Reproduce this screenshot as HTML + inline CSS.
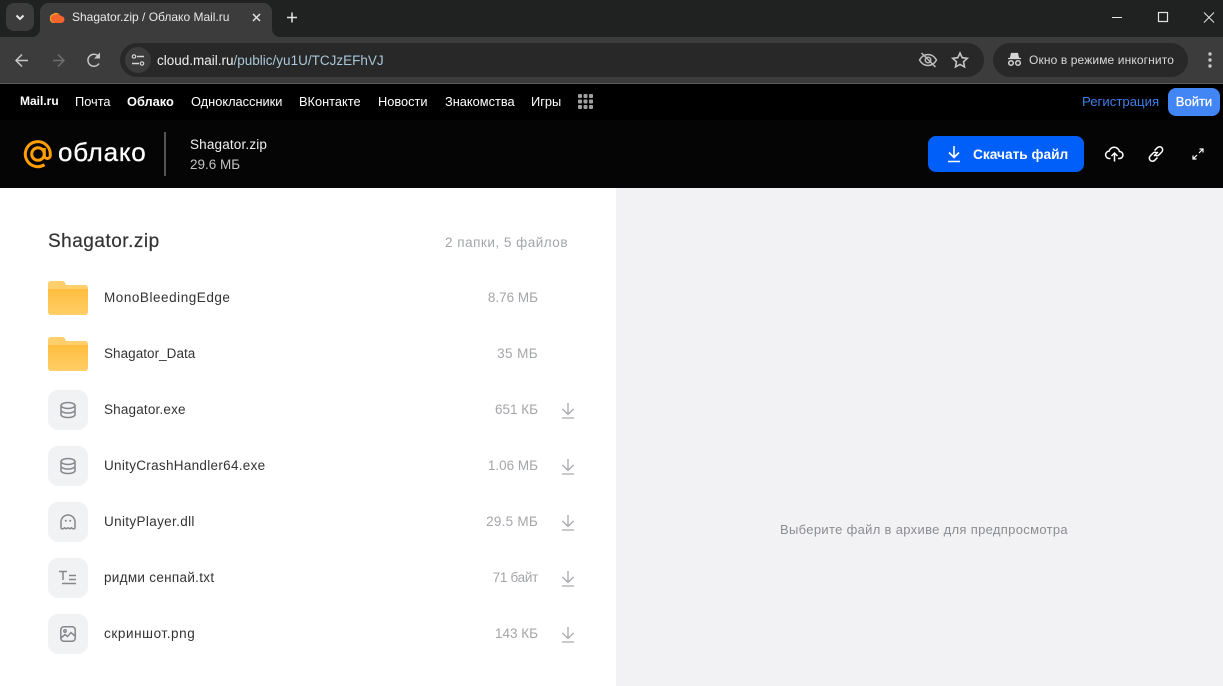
<!DOCTYPE html>
<html lang="ru"><head><meta charset="utf-8"><title>Shagator.zip / Облако Mail.ru</title>
<style>
html,body{margin:0;padding:0;width:1223px;height:686px;overflow:hidden;background:#fff;font-family:"Liberation Sans","DejaVu Sans",sans-serif}
.a{position:absolute;white-space:nowrap}
svg{position:absolute;overflow:visible}
.nav{top:94px;font-size:12.8px;line-height:15px;color:#fff}
.name{left:104px;font-size:13.5px;line-height:16px;color:#333;letter-spacing:.35px}
.size{right:685px;font-size:13.5px;line-height:16px;color:#a3a5a9}
.ic{left:48px;width:40px;height:40px;border-radius:10px;background:#f1f2f4}
</style></head><body>
<div class="a" style="left:0;top:0;width:1223px;height:37px;background:#202222"></div>
<div class="a" style="left:0;top:37px;width:1223px;height:46px;background:#3c3c3c"></div>
<div class="a" style="left:0;top:83px;width:1223px;height:1px;background:#5a5a5a"></div>
<div class="a" style="left:6px;top:3px;width:28px;height:28px;border-radius:8px;background:#3c3c3c"></div>
<svg style="left:0;top:0" width="40" height="37"><path d="M16.5 15.5l3.500 3.500 3.500-3.500" fill="none" stroke="#e8e8e8" stroke-width="2"/></svg>
<div class="a" style="left:40px;top:3px;width:232px;height:34px;border-radius:9px 9px 0 0;background:#3c3c3c"></div>
<svg style="left:0;top:0" width="300" height="40"><path d="M32 37a8 8 0 0 0 8-8v8zM272 29a8 8 0 0 0 8 8h-8z" fill="#3c3c3c"/><path d="M50 18a4 4 0 0 1 3-4a4.500 4.500 0 0 1 6 0l-2 9h-4a4 4 0 0 1-3-5z" fill="#ffa92b"/><path d="M55 14.500a4.500 4.500 0 0 1 6 1.500a3.500 3.500 0 0 1 0 7h-6a4 4 0 0 1 0-8.500z" fill="#f4642c"/><path d="M253 14l7 7m0-7l-7 7" stroke="#e3e3e3" stroke-width="1.500"/><path d="M292 12.500v10M287 17.500h10" stroke="#e3e3e3" stroke-width="1.500"/></svg>
<div class="a" style="left:72px;top:10px;font-size:12px;line-height:15px;color:#e8e8e8">Shagator.zip / Облако Mail.ru</div>
<svg style="left:1110px;top:0" width="113" height="37"><path d="M2 17.500h10" stroke="#e5e5e5" stroke-width="1"/><rect x="48.500" y="12.500" width="9" height="9" fill="none" stroke="#e5e5e5" stroke-width="1.200"/><path d="M94 12.500l10 10m0-10l-10 10" stroke="#e5e5e5" stroke-width="1"/></svg>
<svg style="left:0;top:37px" width="120" height="46"><path d="M28 23.500H17M22 17.500l-6 6 6 6" fill="none" stroke="#c7c7c7" stroke-width="1.500"/><path d="M53 23.500h10M58 17.500l6 6-6 6" fill="none" stroke="#6e6e6e" stroke-width="1.500"/><path d="M99 20a6 6 0 1 0 0 6.500" fill="none" stroke="#c7c7c7" stroke-width="1.500"/><path d="M100 15.500v6h-6z" fill="#c7c7c7"/></svg>
<div class="a" style="left:120px;top:43px;width:864px;height:34px;border-radius:17px;background:#282828"></div>
<div class="a" style="left:125px;top:47px;width:26px;height:26px;border-radius:13px;background:#3c3c3c"></div>
<svg style="left:125px;top:47px" width="26" height="26"><circle cx="9" cy="9.500" r="1.700" fill="none" stroke="#d5d5d5" stroke-width="1.200"/><path d="M12 9.500h7M7 16.500h7" stroke="#d5d5d5" stroke-width="1.400"/><circle cx="17" cy="16.500" r="1.700" fill="none" stroke="#d5d5d5" stroke-width="1.200"/></svg>
<div class="a" style="left:157px;top:52px;font-size:13.5px;line-height:17px;color:#a8c7d8"><span style="color:#eee">cloud.mail.ru</span>/public/yu1U/TCJzEFhVJ</div>
<svg style="left:918px;top:50px" width="54" height="20"><path d="M1.500 10c2-3.500 5-5.500 8.500-5.500S16.500 6.500 18.500 10c-2 3.500-5 5.500-8.500 5.500S3.500 13.500 1.500 10z" fill="none" stroke="#bdbdbd" stroke-width="1.500"/><circle cx="10" cy="10" r="2.800" fill="none" stroke="#bdbdbd" stroke-width="1.400"/><path d="M3.500 3l14 14" stroke="#bdbdbd" stroke-width="1.500"/><path d="M42 3l2.200 4.700 5.100.6-3.800 3.500 1 5.100-4.500-2.500-4.500 2.500 1-5.100-3.800-3.500 5.100-.6z" fill="none" stroke="#c4c4c4" stroke-width="1.600"/></svg>
<div class="a" style="left:993px;top:43px;width:195px;height:34px;border-radius:17px;background:#282828"></div>
<svg style="left:1005px;top:50px" width="20" height="20"><path d="M3 8.500h13M5.500 8l1-4.500h6l1 4.500" fill="#d5d5d5" stroke="#d5d5d5" stroke-width="1.300"/><circle cx="6" cy="13" r="2.300" fill="none" stroke="#d5d5d5" stroke-width="1.500"/><circle cx="13" cy="13" r="2.300" fill="none" stroke="#d5d5d5" stroke-width="1.500"/></svg>
<div class="a" style="left:1029px;top:53px;font-size:12px;line-height:15px;color:#d9d9d9;letter-spacing:.12px">Окно в режиме инкогнито</div>
<svg style="left:1205px;top:50px" width="10" height="20"><circle cx="5" cy="4" r="1.700" fill="#c7c7c7"/><circle cx="5" cy="10" r="1.700" fill="#c7c7c7"/><circle cx="5" cy="16" r="1.700" fill="#c7c7c7"/></svg>

<div class="a" style="left:0;top:84px;width:1223px;height:36px;background:#000"></div>
<div class="a nav" style="left:20px;font-weight:bold;font-size:12px">Mail.ru</div>
<div class="a nav" style="left:75px">Почта</div>
<div class="a nav" style="left:127px;font-weight:bold">Облако</div>
<div class="a nav" style="left:191px">Одноклассники</div>
<div class="a nav" style="left:299px">ВКонтакте</div>
<div class="a nav" style="left:378px">Новости</div>
<div class="a nav" style="left:445px">Знакомства</div>
<div class="a nav" style="left:531px">Игры</div>
<svg style="left:578px;top:94px" width="16" height="16" fill="#a0a0a0"><rect y="0" width="4" height="4" rx="1"/><rect x="5.500" width="4" height="4" rx="1"/><rect x="11" width="4" height="4" rx="1"/><rect y="5.500" width="4" height="4" rx="1"/><rect x="5.500" y="5.500" width="4" height="4" rx="1"/><rect x="11" y="5.500" width="4" height="4" rx="1"/><rect y="11" width="4" height="4" rx="1"/><rect x="5.500" y="11" width="4" height="4" rx="1"/><rect x="11" y="11" width="4" height="4" rx="1"/></svg>
<div class="a nav" style="left:1082px;color:#3f7ee8;font-size:13.2px">Регистрация</div>
<div class="a" style="left:1168px;top:88px;width:52px;height:28px;border-radius:8px;background:#4285f4;color:#fff;font-size:13px;line-height:27px;text-align:center;-webkit-text-stroke:.25px #fff">Войти</div>

<div class="a" style="left:0;top:120px;width:1223px;height:68px;background:#050505"></div>
<svg style="left:24px;top:140px" width="28" height="28"><circle cx="14" cy="14" r="6.300" fill="none" stroke="#ff9e00" stroke-width="3"/><path d="M20.300 8v7.500a3 3 0 0 0 6 0V14A12.500 12.500 0 1 0 20.500 24.700" fill="none" stroke="#ff9e00" stroke-width="3"/></svg>
<div class="a" style="left:58px;top:136px;font-size:26px;line-height:32px;color:#fff;letter-spacing:.75px;-webkit-text-stroke:.3px #fff">облако</div>
<div class="a" style="left:164px;top:132px;width:2px;height:44px;background:#555"></div>
<div class="a" style="left:190px;top:136px;font-size:13.5px;line-height:17px;color:#f0f0f0;letter-spacing:.17px">Shagator.zip</div>
<div class="a" style="left:190px;top:156px;font-size:13.5px;line-height:17px;color:#c2c2c2">29.6 МБ</div>
<div class="a" style="left:928px;top:136px;width:156px;height:36px;border-radius:8px;background:#005ff9"></div>
<svg style="left:946px;top:145px" width="16" height="18"><path d="M8 1v11M3 7.500l5 5 5-5M2 16.500h12" fill="none" stroke="#fff" stroke-width="1.600"/></svg>
<div class="a" style="left:973px;top:146px;font-size:13.7px;line-height:17px;font-weight:bold;color:#fff">Скачать файл</div>
<svg style="left:1105px;top:145px" width="19" height="18"><path d="M5.500 13.500h-1a3.700 3.700 0 0 1-.4-7.400 5.300 5.300 0 0 1 10.300.4 3.500 3.500 0 0 1 .1 7h-1.500" fill="none" stroke="#fff" stroke-width="1.500"/><path d="M9.500 16.500V8.500M6.500 11l3-3 3 3" fill="none" stroke="#fff" stroke-width="1.500"/></svg>
<svg style="left:1147px;top:145px" width="18" height="18"><path d="M7.500 5.500l2.800-2.800a3 3 0 0 1 4.500 4.300l-2.800 2.800a3 3 0 0 1-3.500.5M10.500 12.500l-2.800 2.800a3 3 0 0 1-4.500-4.300l2.800-2.800a3 3 0 0 1 3.500-.5M7 11l4-4" fill="none" stroke="#fff" stroke-width="1.500"/></svg>
<svg style="left:1192px;top:148px" width="12" height="12"><path d="M7 5l4-4M7.500 1H11v3.500M5 7l-4 4M1 7.500V11h3.500" fill="none" stroke="#fff" stroke-width="1.200"/></svg>

<div class="a" style="left:616px;top:188px;width:607px;height:498px;background:#f2f2f4"></div>
<div class="a" style="left:48px;top:231px;font-size:19px;line-height:22px;color:#333;letter-spacing:.5px;-webkit-text-stroke:.2px #333">Shagator.zip</div>
<div class="a" style="right:655px;top:235px;font-size:13.5px;line-height:16px;color:#a3a5a9;letter-spacing:.5px">2 папки, 5 файлов</div>
<div class="a" style="left:780px;top:522px;font-size:13px;line-height:16px;color:#8b8d91;letter-spacing:.32px">Выберите файл в архиве для предпросмотра</div>

<svg style="left:48px;top:281px" width="40" height="34"><defs><linearGradient id="f" x1="0" y1="0" x2="0" y2="1"><stop offset="0" stop-color="#ffbd3e"/><stop offset="1" stop-color="#ffce68"/></linearGradient></defs><path d="M0 3a3 3 0 0 1 3-3h11a3 3 0 0 1 3 2l1 2h19a3 3 0 0 1 3 3v4H0z" fill="#ffcf6c"/><path d="M0 8h40v23a3 3 0 0 1-3 3H3a3 3 0 0 1-3-3z" fill="url(#f)"/></svg>
<svg style="left:48px;top:337px" width="40" height="34"><path d="M0 3a3 3 0 0 1 3-3h11a3 3 0 0 1 3 2l1 2h19a3 3 0 0 1 3 3v4H0z" fill="#ffcf6c"/><path d="M0 8h40v23a3 3 0 0 1-3 3H3a3 3 0 0 1-3-3z" fill="url(#f)"/></svg>
<div class="a name" style="top:290px;letter-spacing:.54px">MonoBleedingEdge</div><div class="a size" style="top:290px">8.76 МБ</div>
<div class="a name" style="top:346px;letter-spacing:.04px">Shagator_Data</div><div class="a size" style="top:346px;letter-spacing:.4px">35 МБ</div>

<div class="a ic" style="top:390px"></div>
<svg style="left:60px;top:402px" width="16" height="16" fill="none" stroke="#85878b" stroke-width="1.500"><ellipse cx="8" cy="3.500" rx="7" ry="3"/><path d="M1 3.500v9c0 1.700 3 3 7 3s7-1.300 7-3v-9M1 8c0 1.700 3 3 7 3s7-1.300 7-3"/></svg>
<div class="a name" style="top:402px;letter-spacing:.18px">Shagator.exe</div><div class="a size" style="top:402px">651 КБ</div>

<div class="a ic" style="top:446px"></div>
<svg style="left:60px;top:458px" width="16" height="16" fill="none" stroke="#85878b" stroke-width="1.500"><ellipse cx="8" cy="3.500" rx="7" ry="3"/><path d="M1 3.500v9c0 1.700 3 3 7 3s7-1.300 7-3v-9M1 8c0 1.700 3 3 7 3s7-1.300 7-3"/></svg>
<div class="a name" style="top:458px;letter-spacing:.3px">UnityCrashHandler64.exe</div><div class="a size" style="top:458px">1.06 МБ</div>

<div class="a ic" style="top:502px"></div>
<svg style="left:60px;top:514px" width="16" height="16"><path d="M1 8a7 7 0 0 1 14 0v5.500c0 1.500-1.500 1.700-2.500 1l-1-.7-1.500 1-2-1-2 1-1.500-1-1 .7c-1 .7-2.500.5-2.500-1z" fill="none" stroke="#85878b" stroke-width="1.500"/><circle cx="5.800" cy="6.800" r="1" fill="#85878b"/><circle cx="10.200" cy="6.800" r="1" fill="#85878b"/></svg>
<div class="a name" style="top:514px">UnityPlayer.dll</div><div class="a size" style="top:514px;letter-spacing:.25px">29.5 МБ</div>

<div class="a ic" style="top:558px"></div>
<svg style="left:59px;top:570px" width="18" height="16" fill="none" stroke="#85878b" stroke-width="1.500"><path d="M0 1.500h8M4 1.500v8.500M10 5.500h7M10 9.500h7M3 13.500h14"/></svg>
<div class="a name" style="top:570px;letter-spacing:.3px">ридми сенпай.txt</div><div class="a size" style="top:570px;letter-spacing:-.3px">71 байт</div>

<div class="a ic" style="top:614px"></div>
<svg style="left:60px;top:626px" width="16" height="16" fill="none" stroke="#85878b" stroke-width="1.500"><rect x=".8" y=".8" width="14.400" height="14.400" rx="3"/><circle cx="5" cy="5" r="1.200"/><path d="M1 12l4-3.500 2.500 2L11 6.500l4 3.500"/></svg>
<div class="a name" style="top:626px;letter-spacing:.6px">скриншот.png</div><div class="a size" style="top:626px">143 КБ</div>

<svg style="left:561px;top:403px" width="14" height="16" fill="none" stroke="#a8aaae" stroke-width="1.300"><path d="M7 0v11M1.500 6l5.500 5.500L12.500 6M1 15h12"/></svg>
<svg style="left:561px;top:459px" width="14" height="16" fill="none" stroke="#a8aaae" stroke-width="1.300"><path d="M7 0v11M1.500 6l5.500 5.500L12.500 6M1 15h12"/></svg>
<svg style="left:561px;top:515px" width="14" height="16" fill="none" stroke="#a8aaae" stroke-width="1.300"><path d="M7 0v11M1.500 6l5.500 5.500L12.500 6M1 15h12"/></svg>
<svg style="left:561px;top:571px" width="14" height="16" fill="none" stroke="#a8aaae" stroke-width="1.300"><path d="M7 0v11M1.500 6l5.500 5.500L12.500 6M1 15h12"/></svg>
<svg style="left:561px;top:627px" width="14" height="16" fill="none" stroke="#a8aaae" stroke-width="1.300"><path d="M7 0v11M1.500 6l5.500 5.500L12.500 6M1 15h12"/></svg>
</body></html>
